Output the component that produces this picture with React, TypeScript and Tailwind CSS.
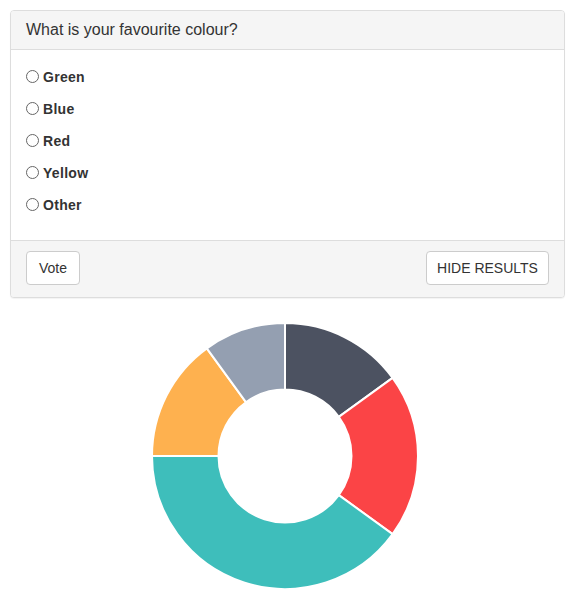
import React from "react";

const segments = [
  { value: 15, color: "#4C5261" },
  { value: 20, color: "#FB4446" },
  { value: 40, color: "#3EBEBB" },
  { value: 15, color: "#FEB14F" },
  { value: 10, color: "#949FB1" },
];

function arcPath(cx: number, cy: number, r: number, ri: number, a0: number, a1: number) {
  const p = (rad: number, a: number) => [cx + rad * Math.sin(a), cy - rad * Math.cos(a)];
  const [x0, y0] = p(r, a0);
  const [x1, y1] = p(r, a1);
  const [x2, y2] = p(ri, a1);
  const [x3, y3] = p(ri, a0);
  const large = a1 - a0 > Math.PI ? 1 : 0;
  return `M${x0} ${y0} A${r} ${r} 0 ${large} 1 ${x1} ${y1} L${x2} ${y2} A${ri} ${ri} 0 ${large} 0 ${x3} ${y3} Z`;
}

function Donut() {
  const total = segments.reduce((s, x) => s + x.value, 0);
  let acc = 0;
  const cx = 134, cy = 134, r = 133, ri = 66.5;
  return (
    <svg width={268} height={268} viewBox="0 0 268 268">
      {segments.map((s, i) => {
        const a0 = (acc / total) * Math.PI * 2;
        acc += s.value;
        const a1 = (acc / total) * Math.PI * 2;
        return (
          <path key={i} d={arcPath(cx, cy, r, ri, a0, a1)} fill={s.color} stroke="#fff" strokeWidth={2} strokeLinejoin="round" />
        );
      })}
    </svg>
  );
}

const options = ["Green", "Blue", "Red", "Yellow", "Other"];

export default function App() {
  return (
    <div className="p-[10px] bg-white min-h-[597px] text-[14px] text-[#333]" style={{ fontFamily: '"Liberation Sans", Arial, sans-serif' }}>
      <div className="w-[555px] border border-[#ddd] rounded-[4px] bg-white shadow-[0_1px_1px_rgba(0,0,0,0.05)]">
        <div className="bg-[#f5f5f5] border-b border-[#ddd] rounded-t-[3px] px-[15px] py-[10px]">
          <h3 className="text-[16px] leading-[17.6px] text-[#333]">What is your favourite colour?</h3>
        </div>
        <div className="px-[15px] pt-[17px] pb-[25px] flex flex-col gap-[12px]">
          {options.map((o) => (
            <label key={o} className="flex items-center h-[20px] leading-[20px]">
              <span className="w-[13px] h-[13px] rounded-full border border-[#666] bg-white mr-[4px] shrink-0" />
              <span className="font-bold text-[14px] text-[#333] tracking-[0.3px]">{o}</span>
            </label>
          ))}
        </div>
        <div className="bg-[#f5f5f5] border-t border-[#ddd] rounded-b-[3px] px-[15px] pt-[10px] pb-[12px] flex justify-between">
          <button className="h-[34px] w-[54px] bg-white border border-[#ccc] rounded-[4px] text-[14px] text-[#333] leading-[20px]">Vote</button>
          <button className="h-[34px] w-[123px] bg-white border border-[#ccc] rounded-[4px] text-[14px] text-[#333] leading-[20px]">HIDE RESULTS</button>
        </div>
      </div>
      <div className="mt-[24px] ml-[141px]">
        <Donut />
      </div>
    </div>
  );
}
